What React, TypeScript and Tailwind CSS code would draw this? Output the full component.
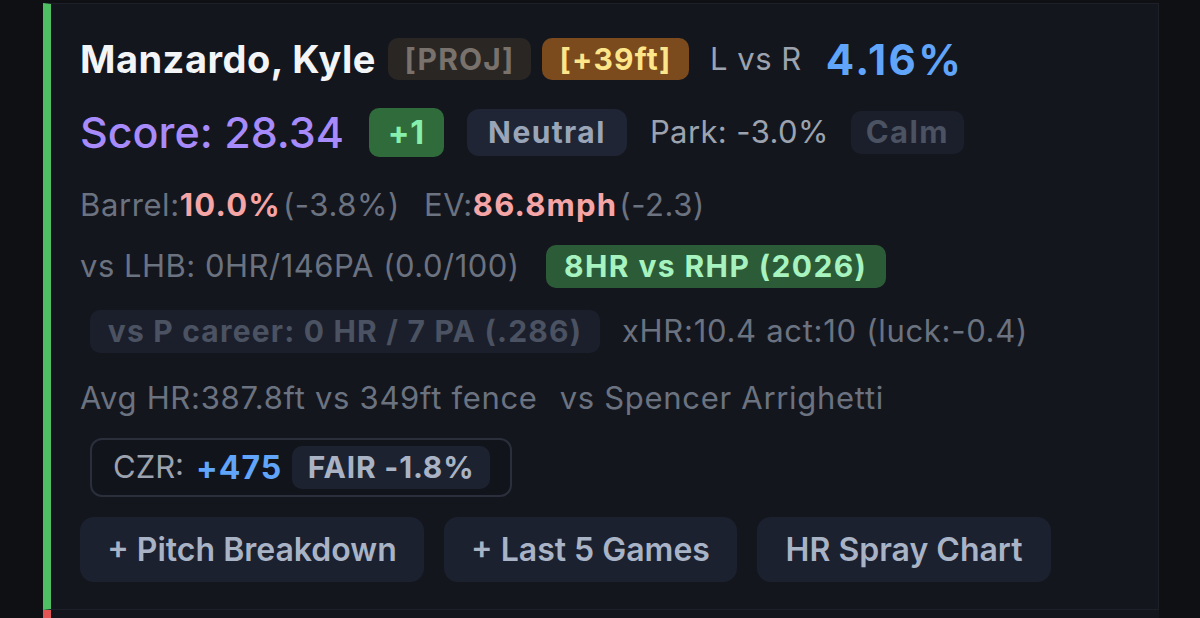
const font = { fontFamily: "Inter, 'Noto Sans', sans-serif" };

function Badge({ className, children }: { className: string; children: React.ReactNode }) {
  return (
    <span className={`inline-flex shrink-0 items-center justify-center rounded-[10px] font-bold ${className}`}>
      {children}
    </span>
  );
}

const actions = [
  { label: "+ Pitch Breakdown", w: "w-[344px]" },
  { label: "+ Last 5 Games", w: "w-[293px]" },
  { label: "HR Spray Chart", w: "w-[294px]" },
];

export default function App() {
  return (
    <div className="w-[1200px] h-[618px] overflow-hidden bg-[#0f1014]" style={font}>
      <div className="ml-[43px] mt-[3px] w-[1116px] border-y border-r border-[#1d2029] border-l-[8px] border-l-[#4fbf63] bg-[#14161e] pl-[29px] pt-[34px] pb-[27px]">
        {/* name + tags */}
        <div className="flex h-[42px] items-center whitespace-nowrap">
          <span className="text-[38px] font-bold tracking-[0.5px] text-[#f3f4f6]">Manzardo, Kyle</span>
          <Badge className="ml-[12px] h-[42px] w-[143px] bg-[#2a2624] text-[30px] tracking-[1.2px] text-[#78716c]">[PROJ]</Badge>
          <Badge className="ml-[11px] h-[42px] w-[147px] bg-[#7b4a1d] text-[30px] tracking-[1.2px] text-[#fde68a]">[+39ft]</Badge>
          <span className="ml-[21px] text-[31px] tracking-[0.5px] text-[#9ca3af]">L vs R</span>
          <span className="ml-[24px] text-[42px] font-bold tracking-[2.5px] text-[#60a5fa]">4.16%</span>
        </div>

        {/* score row */}
        <div className="mt-[28px] flex h-[49px] items-center whitespace-nowrap">
          <span className="text-[43px] font-medium text-[#a78bfa]">Score: 28.34</span>
          <Badge className="ml-[25px] h-[49px] w-[75px] bg-[#2f6b3b] text-[32px] tracking-[1px] text-[#86efac]">+1</Badge>
          <Badge className="ml-[23px] h-[47px] w-[160px] rounded-[12px] bg-[#1f2535] text-[30px] tracking-[1.4px] text-[#9aa5b8]">Neutral</Badge>
          <span className="ml-[23px] text-[31px] tracking-[0.4px] text-[#9ca3af]">Park: -3.0%</span>
          <Badge className="ml-[22px] h-[43px] w-[113px] bg-[#1b1f2b] text-[31px] tracking-[1.4px] text-[#4b5262]">Calm</Badge>
        </div>

        {/* contact quality */}
        <div className="mt-[28px] flex h-[40px] items-center whitespace-nowrap text-[31px] tracking-[0.6px] text-[#6b7280]">
          <span>Barrel:</span>
          <span className="font-bold tracking-[1.2px] text-[#f5a5a5]">10.0%</span>
          <span className="ml-[2px]">(-3.8%)</span>
          <span className="ml-[24px]">EV:</span>
          <span className="font-bold tracking-[1.2px] text-[#f5a5a5]">86.8mph</span>
          <span className="ml-[2px]">(-2.3)</span>
        </div>

        {/* platoon split */}
        <div className="mt-[20px] flex h-[43px] items-center whitespace-nowrap text-[31px] tracking-[0.5px] text-[#6b7280]">
          <span>vs LHB: 0HR/146PA (0.0/100)</span>
          <Badge className="ml-[26px] h-[43px] w-[340px] bg-[#2c5c37] text-[30px] tracking-[1.4px] text-[#a7f3c0]">8HR vs RHP (2026)</Badge>
        </div>

        {/* career vs pitcher */}
        <div className="mt-[22px] flex h-[43px] items-center whitespace-nowrap text-[31px] tracking-[0.7px] text-[#6b7280]">
          <Badge className="ml-[10px] h-[43px] w-[510px] bg-[#1b1f2b] text-[30px] tracking-[1.2px] text-[#4b5262]">
            vs P career: 0 HR / 7 PA (.286)
          </Badge>
          <span className="ml-[22px]">xHR:10.4 act:10 (luck:-0.4)</span>
        </div>

        {/* distance + opponent */}
        <div className="mt-[25px] flex h-[40px] items-center whitespace-nowrap text-[31px] tracking-[0.7px] text-[#6b7280]">
          <span>Avg HR:387.8ft vs 349ft fence</span>
          <span className="ml-[22px]">vs Spencer Arrighetti</span>
        </div>

        {/* odds */}
        <div className="ml-[10px] mt-[20px] flex h-[59px] w-[422px] items-center whitespace-nowrap rounded-[12px] border-2 border-[#2a2f3b] bg-[#12141b] pl-[21px]">
          <span className="text-[31px] text-[#9ca3af]">CZR:</span>
          <span className="ml-[12px] text-[32px] font-bold tracking-[1px] text-[#60a5fa]">+475</span>
          <Badge className="ml-[10px] h-[43px] w-[198px] bg-[#1d2231] text-[30px] tracking-[0.8px] text-[#a9b3c4]">FAIR -1.8%</Badge>
        </div>

        {/* expanders */}
        <div className="mt-[20px] flex h-[65px] gap-[20px]">
          {actions.map((a) => (
            <button
              key={a.label}
              className={`h-[65px] ${a.w} whitespace-nowrap rounded-[14px] bg-[#1c2130] text-[32px] font-semibold text-[#a9b3c6]`}
            >
              {a.label}
            </button>
          ))}
        </div>
      </div>
      <div className="ml-[43px] h-[10px] w-[1116px] border-l-[8px] border-l-[#e25555] bg-[#14161e]" />
    </div>
  );
}
